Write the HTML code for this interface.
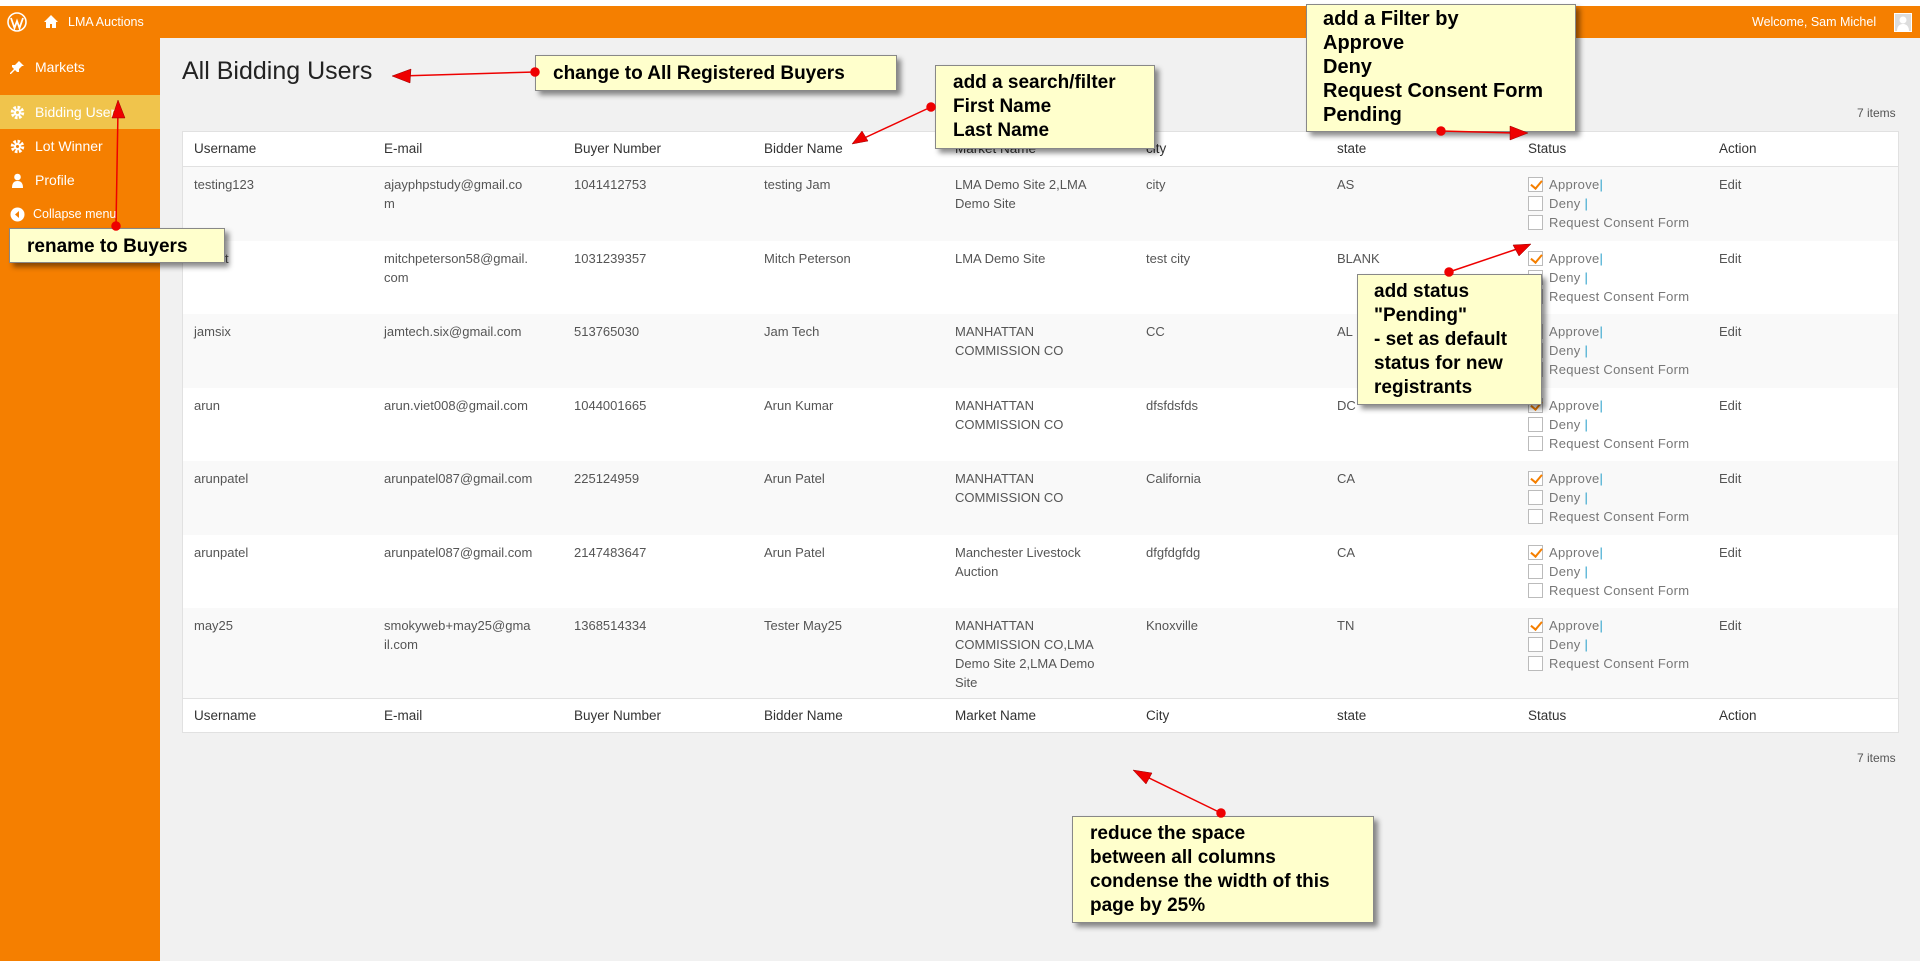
<!DOCTYPE html>
<html><head><meta charset="utf-8"><style>
*{margin:0;padding:0;box-sizing:border-box}
body{width:1920px;height:961px;position:relative;overflow:hidden;background:#f1f1f1;font-family:"Liberation Sans",Arial,sans-serif}
.abs{position:absolute}
#hdr{left:0;top:6px;width:1920px;height:32px;background:#f57f00;color:#fff;font-size:13px}
#side{left:0;top:38px;width:160px;height:923px;background:#f57f00}
.mi{position:absolute;left:0;width:160px;color:#fff;font-size:14px;padding-left:35px;line-height:34px}
.mi .ic{position:absolute;left:10px;top:10px;width:15px;height:15px}
#tbl{left:182px;top:131px;width:1717px;height:602px;background:#fff;border:1px solid #e1e1e1}
.row{position:absolute;left:0;width:1715px}
.c{position:absolute;font-size:13px;line-height:19px;color:#555;white-space:nowrap}
.h .c{color:#333;font-size:13.5px}
.cb{display:inline-block;width:15px;height:15px;border:1px solid #bbb;background:#fff;vertical-align:-3px;margin-right:6px;position:relative}
.cb.on::after{content:"";position:absolute;left:4px;top:0px;width:5px;height:9px;border:solid #f57f00;border-width:0 2px 2px 0;transform:rotate(40deg)}
.st{color:#777;letter-spacing:.3px}.st b{font-weight:normal;color:#2ea2cc}
.note{position:absolute;background:#ffffcc;border:1px solid #888;box-shadow:4px 4px 5px rgba(0,0,0,.45);font-weight:bold;color:#000;font-size:19px;line-height:24px}
</style></head><body>
<div class="abs" style="left:0;top:0;width:1920px;height:6px;background:#fff"></div>
<div id="hdr" class="abs">
 <svg class="abs" style="left:7px;top:6px" width="20" height="20" viewBox="0 0 20 20"><circle cx="10" cy="10" r="9" fill="none" stroke="#fff" stroke-width="1.6"/><path d="M4 6l3.5 10L10 9l2.5 7L16 6" fill="none" stroke="#fff" stroke-width="1.8"/></svg>
 <svg class="abs" style="left:43px;top:8px" width="16" height="15" viewBox="0 0 16 15"><path d="M8 1L1 8h2v6h4v-4h2v4h4V8h2z" fill="#fff"/></svg>
 <span class="abs" style="left:68px;top:9px;font-size:12.5px">LMA Auctions</span>
 <span class="abs" style="left:1752px;top:9px;font-size:12.5px">Welcome, Sam Michel</span>
 <div class="abs" style="left:1894px;top:7px;width:18px;height:19px;background:#ddd;border:1px solid #fff"><svg width="16" height="17" viewBox="0 0 16 17"><circle cx="8" cy="6" r="3.5" fill="#fff"/><path d="M2 17c0-5 3-7 6-7s6 2 6 7z" fill="#fff"/></svg></div>
</div>
<div id="side" class="abs">
 <div class="mi" style="top:12px"><svg class="ic" viewBox="0 0 15 15"><path d="M9 1l5 5-2 0-3 3 0 3-2 0-2-2-4 4-1 0 0-1 4-4-2-2 0-2 3 0 3-3z" fill="#fff"/></svg>Markets</div>
 <div class="mi" style="top:57px;background:#f0c44c"><svg class="ic" viewBox="0 0 15 15"><circle cx="7.5" cy="7.5" r="5" fill="none" stroke="#fff" stroke-width="3.5" stroke-dasharray="2.5 1.4"/><circle cx="7.5" cy="7.5" r="3.5" fill="#fff"/><circle cx="7.5" cy="7.5" r="1.5" fill="#f0c44c"/></svg>Bidding Users</div>
 <div class="mi" style="top:91px"><svg class="ic" viewBox="0 0 15 15"><circle cx="7.5" cy="7.5" r="5" fill="none" stroke="#fff" stroke-width="3.5" stroke-dasharray="2.5 1.4"/><circle cx="7.5" cy="7.5" r="3.5" fill="#fff"/><circle cx="7.5" cy="7.5" r="1.5" fill="#f57f00"/></svg>Lot Winner</div>
 <div class="mi" style="top:125px"><svg class="ic" viewBox="0 0 15 15"><circle cx="7.5" cy="4" r="3.3" fill="#fff"/><path d="M2 15c0-5 2-7 5.5-7s5.5 2 5.5 7z" fill="#fff"/></svg>Profile</div>
 <div class="mi" style="top:159px;font-size:12.5px;padding-left:33px"><svg class="ic" viewBox="0 0 15 15"><circle cx="7.5" cy="7.5" r="7" fill="#fff"/><path d="M9 4L5 7.5 9 11z" fill="#f57f00"/></svg>Collapse menu</div>
</div>
<div class="abs" style="left:182px;top:57px;font-size:25px;color:#222">All Bidding Users</div>
<div class="abs" style="left:1857px;top:106px;font-size:12px;color:#555">7 items</div>
<div class="abs" style="left:1857px;top:751px;font-size:12px;color:#555">7 items</div>
<div id="tbl" class="abs">
<div class="row h" style="top:0;height:35px;border-bottom:1px solid #e1e1e1">
 <div class="c" style="left:11px;top:7px">Username</div><div class="c" style="left:201px;top:7px">E-mail</div><div class="c" style="left:391px;top:7px">Buyer Number</div><div class="c" style="left:581px;top:7px">Bidder Name</div><div class="c" style="left:772px;top:7px">Market Name</div><div class="c" style="left:963px;top:7px">city</div><div class="c" style="left:1154px;top:7px">state</div><div class="c" style="left:1345px;top:7px">Status</div><div class="c" style="left:1536px;top:7px">Action</div>
</div>
<div class="row h" style="top:566px;height:35px;border-top:1px solid #e1e1e1">
 <div class="c" style="left:11px;top:7px">Username</div><div class="c" style="left:201px;top:7px">E-mail</div><div class="c" style="left:391px;top:7px">Buyer Number</div><div class="c" style="left:581px;top:7px">Bidder Name</div><div class="c" style="left:772px;top:7px">Market Name</div><div class="c" style="left:963px;top:7px">City</div><div class="c" style="left:1154px;top:7px">state</div><div class="c" style="left:1345px;top:7px">Status</div><div class="c" style="left:1536px;top:7px">Action</div>
</div>
<div class="row" style="top:35px;height:74px;background:#f9f9f9">
 <div class="c" style="left:11px;top:8px">testing123</div><div class="c" style="left:201px;top:8px">ajayphpstudy@gmail.co<br>m</div><div class="c" style="left:391px;top:8px">1041412753</div><div class="c" style="left:581px;top:8px">testing Jam</div><div class="c" style="left:772px;top:8px">LMA Demo Site 2,LMA<br>Demo Site</div><div class="c" style="left:963px;top:8px">city</div><div class="c" style="left:1154px;top:8px">AS</div>
 <div class="c st" style="left:1345px;top:8px"><span class="cb on"></span>Approve<b>|</b><br><span class="cb"></span>Deny <b>|</b><br><span class="cb"></span>Request Consent Form</div><div class="c" style="left:1536px;top:8px">Edit</div>
</div>
<div class="row" style="top:109px;height:73px">
 <div class="c" style="left:11px;top:8px">mitcht</div><div class="c" style="left:201px;top:8px">mitchpeterson58@gmail.<br>com</div><div class="c" style="left:391px;top:8px">1031239357</div><div class="c" style="left:581px;top:8px">Mitch Peterson</div><div class="c" style="left:772px;top:8px">LMA Demo Site</div><div class="c" style="left:963px;top:8px">test city</div><div class="c" style="left:1154px;top:8px">BLANK</div>
 <div class="c st" style="left:1345px;top:8px"><span class="cb on"></span>Approve<b>|</b><br><span class="cb"></span>Deny <b>|</b><br><span class="cb"></span>Request Consent Form</div><div class="c" style="left:1536px;top:8px">Edit</div>
</div>
<div class="row" style="top:182px;height:74px;background:#f9f9f9">
 <div class="c" style="left:11px;top:8px">jamsix</div><div class="c" style="left:201px;top:8px">jamtech.six@gmail.com</div><div class="c" style="left:391px;top:8px">513765030</div><div class="c" style="left:581px;top:8px">Jam Tech</div><div class="c" style="left:772px;top:8px">MANHATTAN<br>COMMISSION CO</div><div class="c" style="left:963px;top:8px">CC</div><div class="c" style="left:1154px;top:8px">AL</div>
 <div class="c st" style="left:1345px;top:8px"><span class="cb"></span>Approve<b>|</b><br><span class="cb"></span>Deny <b>|</b><br><span class="cb"></span>Request Consent Form</div><div class="c" style="left:1536px;top:8px">Edit</div>
</div>
<div class="row" style="top:256px;height:73px">
 <div class="c" style="left:11px;top:8px">arun</div><div class="c" style="left:201px;top:8px">arun.viet008@gmail.com</div><div class="c" style="left:391px;top:8px">1044001665</div><div class="c" style="left:581px;top:8px">Arun Kumar</div><div class="c" style="left:772px;top:8px">MANHATTAN<br>COMMISSION CO</div><div class="c" style="left:963px;top:8px">dfsfdsfds</div><div class="c" style="left:1154px;top:8px">DC</div>
 <div class="c st" style="left:1345px;top:8px"><span class="cb on"></span>Approve<b>|</b><br><span class="cb"></span>Deny <b>|</b><br><span class="cb"></span>Request Consent Form</div><div class="c" style="left:1536px;top:8px">Edit</div>
</div>
<div class="row" style="top:329px;height:74px;background:#f9f9f9">
 <div class="c" style="left:11px;top:8px">arunpatel</div><div class="c" style="left:201px;top:8px">arunpatel087@gmail.com</div><div class="c" style="left:391px;top:8px">225124959</div><div class="c" style="left:581px;top:8px">Arun Patel</div><div class="c" style="left:772px;top:8px">MANHATTAN<br>COMMISSION CO</div><div class="c" style="left:963px;top:8px">California</div><div class="c" style="left:1154px;top:8px">CA</div>
 <div class="c st" style="left:1345px;top:8px"><span class="cb on"></span>Approve<b>|</b><br><span class="cb"></span>Deny <b>|</b><br><span class="cb"></span>Request Consent Form</div><div class="c" style="left:1536px;top:8px">Edit</div>
</div>
<div class="row" style="top:403px;height:73px">
 <div class="c" style="left:11px;top:8px">arunpatel</div><div class="c" style="left:201px;top:8px">arunpatel087@gmail.com</div><div class="c" style="left:391px;top:8px">2147483647</div><div class="c" style="left:581px;top:8px">Arun Patel</div><div class="c" style="left:772px;top:8px">Manchester Livestock<br>Auction</div><div class="c" style="left:963px;top:8px">dfgfdgfdg</div><div class="c" style="left:1154px;top:8px">CA</div>
 <div class="c st" style="left:1345px;top:8px"><span class="cb on"></span>Approve<b>|</b><br><span class="cb"></span>Deny <b>|</b><br><span class="cb"></span>Request Consent Form</div><div class="c" style="left:1536px;top:8px">Edit</div>
</div>
<div class="row" style="top:476px;height:90px;background:#f9f9f9">
 <div class="c" style="left:11px;top:8px">may25</div><div class="c" style="left:201px;top:8px">smokyweb+may25@gma<br>il.com</div><div class="c" style="left:391px;top:8px">1368514334</div><div class="c" style="left:581px;top:8px">Tester May25</div><div class="c" style="left:772px;top:8px">MANHATTAN<br>COMMISSION CO,LMA<br>Demo Site 2,LMA Demo<br>Site</div><div class="c" style="left:963px;top:8px">Knoxville</div><div class="c" style="left:1154px;top:8px">TN</div>
 <div class="c st" style="left:1345px;top:8px"><span class="cb on"></span>Approve<b>|</b><br><span class="cb"></span>Deny <b>|</b><br><span class="cb"></span>Request Consent Form</div><div class="c" style="left:1536px;top:8px">Edit</div>
</div>
</div>
<div class="note" style="left:535px;top:55px;width:362px;height:36px;padding:6px 0 0 17px">change to All Registered Buyers</div>
<div class="note" style="left:935px;top:65px;width:220px;height:84px;padding:5px 0 0 17px">add a search/filter<br>First Name<br>Last Name</div>
<div class="note" style="left:1306px;top:4px;width:270px;height:128px;padding:2px 0 0 16px;line-height:24px;font-size:20px">add a Filter by<br>Approve<br>Deny<br>Request Consent Form<br>Pending</div>
<div class="note" style="left:1357px;top:274px;width:185px;height:131px;padding:5px 0 0 16px">add status<br>"Pending"<br>- set as default<br>status for new<br>registrants</div>
<div class="note" style="left:9px;top:228px;width:216px;height:35px;padding:6px 0 0 17px">rename to Buyers</div>
<div class="note" style="left:1072px;top:816px;width:302px;height:107px;padding:5px 0 0 17px">reduce the space<br>between all columns<br>condense the width of this<br>page by 25%</div>
<svg class="abs" style="left:0;top:0" width="1920" height="961">
<g stroke="#e00" stroke-width="1.5" fill="#e00">
<line x1="535" y1="72" x2="400" y2="76"/>
<line x1="931" y1="107" x2="860" y2="140"/>
<line x1="1441" y1="131" x2="1515" y2="133"/>
<line x1="1449" y1="272" x2="1520" y2="248"/>
<line x1="116" y1="226" x2="118" y2="110"/>
<line x1="1221" y1="813" x2="1143" y2="775"/>
<circle cx="535" cy="72" r="4"/><circle cx="931" cy="107" r="4"/><circle cx="1441" cy="131" r="4"/><circle cx="1449" cy="272" r="4"/><circle cx="116" cy="226" r="4"/><circle cx="1221" cy="813" r="4"/>
</g>
<g fill="#e00" stroke="#900" stroke-width=".5">
<polygon points="392,76 411,69 410,83"/>
<polygon points="852,144 862,131 868,141"/>
<polygon points="1528,133 1510,126 1510,140"/>
<polygon points="1531,244 1513,245 1519,256"/>
<polygon points="118,100 112,118 125,118"/>
<polygon points="1133,770 1146,784 1152,773"/>
</g>
</svg>
</body></html>
